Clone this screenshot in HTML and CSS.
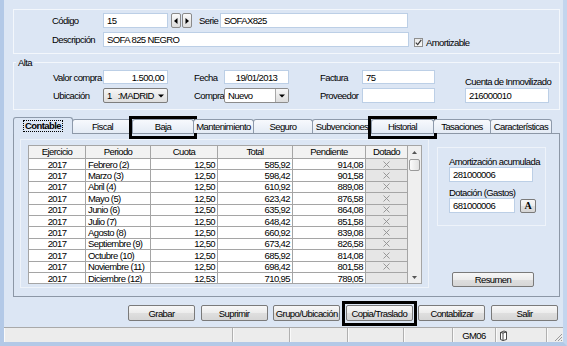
FILE: index.html
```html
<!DOCTYPE html>
<html lang="es">
<head>
<meta charset="utf-8">
<title>Inmovilizado</title>
<link rel="stylesheet" href="styles.css">
</head>
<body>
<div class="win">
  <div class="content">
    <div class="group top">
      <div class="row">
        <span class="lbl w51">Código</span>
        <span class="inp w65">15</span>
        <span class="spin">
          <span class="sb"><svg width="4" height="6" viewBox="0 0 4 6"><path d="M3.5 0 L0 3 L3.5 6 Z" fill="#000"/></svg></span>
          <span class="sb"><svg width="4" height="6" viewBox="0 0 4 6"><path d="M0.5 0 L4 3 L0.5 6 Z" fill="#000"/></svg></span>
        </span>
        <span class="lbl serie">Serie</span>
        <span class="inp w188">SOFAX825</span>
      </div>
      <div class="row">
        <span class="lbl w51">Descripción</span>
        <span class="inp w306">SOFA 825 NEGRO</span>
        <span class="chk"><span class="box"><svg width="7" height="7" viewBox="0 0 7 7"><path d="M0.8 3.6 L2.7 5.6 L6.3 0.9" fill="none" stroke="#3a3a3a" stroke-width="1.2"/></svg></span>Amortizable</span>
      </div>
    </div>

    <fieldset class="alta">
      <legend>Alta</legend>
      <div class="alta-grid">
        <span class="lbl">Valor compra</span>
        <span class="inp right">1.500,00</span>
        <span class="lbl p26">Fecha</span>
        <span class="inp center">19/01/2013</span>
        <span class="lbl p31">Factura</span>
        <span class="inp top-text">75</span>
        <span class="lbl p30 bottom">Cuenta de Inmovilizado</span>

        <span class="lbl">Ubicación</span>
        <span class="combo grey"><span class="val">1&nbsp;&nbsp;&nbsp;:MADRID</span><span class="arrow"><svg width="6" height="4" viewBox="0 0 6 4"><path d="M0 0.5 L6 0.5 L3 3.5 Z" fill="#000"/></svg></span></span>
        <span class="lbl p26">Compra</span>
        <span class="combo"><span class="val">Nuevo</span><span class="arrow btnlike"><svg width="6" height="4" viewBox="0 0 6 4"><path d="M0 0.5 L6 0.5 L3 3.5 Z" fill="#000"/></svg></span></span>
        <span class="lbl p31">Proveedor</span>
        <span class="inp"></span>
        <span class="cuenta"><span class="inp">216000010</span></span>
      </div>
    </fieldset>

    <div class="tabs">
      <span class="tab sel w60"><span class="focus">Contable</span></span>
      <span class="tab w61">Fiscal</span>
      <span class="tab w62 hl">Baja</span>
      <span class="tab w61">Mantenimiento</span>
      <span class="tab w60">Seguro</span>
      <span class="tab w60">Subvenciones</span>
      <span class="tab w63 hl">Historial</span>
      <span class="tab w58">Tasaciones</span>
      <span class="tab w62">Características</span>
    </div>

    <div class="panel">
      <div class="gridbox">
        <table class="grid">
          <colgroup><col class="c1"><col class="c2"><col class="c3"><col class="c4"><col class="c5"><col class="c6"></colgroup>
          <thead>
            <tr><th>Ejercicio</th><th>Periodo</th><th>Cuota</th><th>Total</th><th>Pendiente</th><th>Dotado</th></tr>
          </thead>
          <tbody>
            <tr><td class="c">2017</td><td>Febrero (2)</td><td class="r">12,50</td><td class="r">585,92</td><td class="r">914,08</td><td class="dot"><svg width="7" height="7" viewBox="0 0 7 7"><path d="M0.5 0.5 L6.5 6.5 M6.5 0.5 L0.5 6.5" stroke="#8f8f8f" stroke-width="0.9"/></svg></td></tr>
            <tr><td class="c">2017</td><td>Marzo (3)</td><td class="r">12,50</td><td class="r">598,42</td><td class="r">901,58</td><td class="dot"><svg width="7" height="7" viewBox="0 0 7 7"><path d="M0.5 0.5 L6.5 6.5 M6.5 0.5 L0.5 6.5" stroke="#8f8f8f" stroke-width="0.9"/></svg></td></tr>
            <tr><td class="c">2017</td><td>Abril (4)</td><td class="r">12,50</td><td class="r">610,92</td><td class="r">889,08</td><td class="dot"><svg width="7" height="7" viewBox="0 0 7 7"><path d="M0.5 0.5 L6.5 6.5 M6.5 0.5 L0.5 6.5" stroke="#8f8f8f" stroke-width="0.9"/></svg></td></tr>
            <tr><td class="c">2017</td><td>Mayo (5)</td><td class="r">12,50</td><td class="r">623,42</td><td class="r">876,58</td><td class="dot"><svg width="7" height="7" viewBox="0 0 7 7"><path d="M0.5 0.5 L6.5 6.5 M6.5 0.5 L0.5 6.5" stroke="#8f8f8f" stroke-width="0.9"/></svg></td></tr>
            <tr><td class="c">2017</td><td>Junio (6)</td><td class="r">12,50</td><td class="r">635,92</td><td class="r">864,08</td><td class="dot"><svg width="7" height="7" viewBox="0 0 7 7"><path d="M0.5 0.5 L6.5 6.5 M6.5 0.5 L0.5 6.5" stroke="#8f8f8f" stroke-width="0.9"/></svg></td></tr>
            <tr><td class="c">2017</td><td>Julio (7)</td><td class="r">12,50</td><td class="r">648,42</td><td class="r">851,58</td><td class="dot"><svg width="7" height="7" viewBox="0 0 7 7"><path d="M0.5 0.5 L6.5 6.5 M6.5 0.5 L0.5 6.5" stroke="#8f8f8f" stroke-width="0.9"/></svg></td></tr>
            <tr><td class="c">2017</td><td>Agosto (8)</td><td class="r">12,50</td><td class="r">660,92</td><td class="r">839,08</td><td class="dot"><svg width="7" height="7" viewBox="0 0 7 7"><path d="M0.5 0.5 L6.5 6.5 M6.5 0.5 L0.5 6.5" stroke="#8f8f8f" stroke-width="0.9"/></svg></td></tr>
            <tr><td class="c">2017</td><td>Septiembre (9)</td><td class="r">12,50</td><td class="r">673,42</td><td class="r">826,58</td><td class="dot"><svg width="7" height="7" viewBox="0 0 7 7"><path d="M0.5 0.5 L6.5 6.5 M6.5 0.5 L0.5 6.5" stroke="#8f8f8f" stroke-width="0.9"/></svg></td></tr>
            <tr><td class="c">2017</td><td>Octubre (10)</td><td class="r">12,50</td><td class="r">685,92</td><td class="r">814,08</td><td class="dot"><svg width="7" height="7" viewBox="0 0 7 7"><path d="M0.5 0.5 L6.5 6.5 M6.5 0.5 L0.5 6.5" stroke="#8f8f8f" stroke-width="0.9"/></svg></td></tr>
            <tr><td class="c">2017</td><td>Noviembre (11)</td><td class="r">12,50</td><td class="r">698,42</td><td class="r">801,58</td><td class="dot"><svg width="7" height="7" viewBox="0 0 7 7"><path d="M0.5 0.5 L6.5 6.5 M6.5 0.5 L0.5 6.5" stroke="#8f8f8f" stroke-width="0.9"/></svg></td></tr>
            <tr><td class="c">2017</td><td>Diciembre (12)</td><td class="r">12,53</td><td class="r">710,95</td><td class="r">789,05</td><td class="dot"></td></tr>
          </tbody>
        </table>
        <div class="vscroll">
          <span class="sarrow"><svg width="5" height="3" viewBox="0 0 5 3"><path d="M0 3 L5 3 L2.5 0 Z" fill="#555"/></svg></span>
          <span class="thumb"></span>
          <span class="strack"></span>
          <span class="sarrow"><svg width="5" height="3" viewBox="0 0 5 3"><path d="M0 0 L5 0 L2.5 3 Z" fill="#555"/></svg></span>
        </div>
      </div>

      <div class="side">
        <div class="sidebox">
          <span class="slbl">Amortización acumulada</span>
          <span class="inp w84">281000006</span>
          <span class="slbl mt">Dotación (Gastos)</span>
          <span class="srow"><span class="inp w66">681000006</span><span class="btn abtn">A</span></span>
        </div>
        <span class="btn resumen">Resumen</span>
      </div>
    </div>

    <div class="buttons">
      <span class="btn">Grabar</span>
      <span class="btn">Suprimir</span>
      <span class="btn">Grupo/Ubicación</span>
      <span class="btn hl hlb">Copia/Traslado</span>
      <span class="btn">Contabilizar</span>
      <span class="btn">Salir</span>
    </div>
  </div>

  <div class="status">
    <span class="seg s1"></span>
    <span class="seg s2"></span>
    <span class="seg s3"></span>
    <span class="seg s4"></span>
    <span class="seg s5"></span>
    <span class="seg s6">GM06</span>
    <span class="seg s7"><svg width="9" height="11" viewBox="0 0 9 11"><path d="M1.5 2.5 L5 1 L7.5 2 L7.5 9.5 L4 10.5 L1.5 9.5 Z M4 3 L4 10.5 M1.5 2.5 L4 3 L7.5 2" fill="#fff" stroke="#333" stroke-width="0.9"/></svg></span>
    <span class="seg s8"><svg width="10" height="10" viewBox="0 0 10 10"><path d="M9 2 L2 9 M9 5 L5 9 M9 8 L8 9" stroke="#9a9a9a" stroke-width="1"/></svg></span>
  </div>
</div>
</body>
</html>
```

FILE: styles.css
```css
* { box-sizing: border-box; }
html, body { margin: 0; padding: 0; }
body {
  width: 567px;
  height: 346px;
  overflow: hidden;
  font-family: "Liberation Sans", Arial, sans-serif;
  font-size: 9.5px;
  letter-spacing: -0.6px;
  line-height: 11px;
  color: #000;
  background: #dce6f4;
}
.win {
  width: 567px;
  height: 346px;
  display: flex;
  flex-direction: column;
  background: #dce6f4;
  border-left: 4px solid #b3c9e7;
  border-right: 4px solid #c3d5ee;
  border-bottom: 4px solid #b3c9e7;
}
.content { padding: 9px 3px 0 9px; }

/* generic */
.lbl { white-space: nowrap; display: flex; align-items: center; }
.inp {
  display: flex;
  align-items: center;
  height: 15px;
  background: #fff;
  border: 1px solid #bccfe6;
  padding: 0 3px;
  white-space: nowrap;
  overflow: hidden;
}
.inp.right { justify-content: flex-end; }
.inp.center { justify-content: center; }
.inp.top-text { align-items: flex-start; padding-top: 1px; }
.w51 { width: 51px; }
.w65 { width: 65px; }
.w66 { width: 66px; }
.w84 { width: 84px; }
.w188 { width: 188px; }
.w306 { width: 306px; }

.btn {
  display: flex;
  align-items: center;
  justify-content: center;
  height: 16px;
  border: 1px solid #7a7a7a;
  border-radius: 2px;
  background: linear-gradient(#f7f7f7 0%, #ececec 50%, #dfdfdf 51%, #d6d6d6 100%);
  white-space: nowrap;
}

/* top group */
.group { border: 1px solid #f3f7fc; }
.top { padding: 3px 0 6px 38px; display: flex; flex-direction: column; gap: 4px; }
.row { display: flex; height: 15px; }
.spin { display: flex; margin-left: 3px; width: 21px; height: 15px; gap: 1px; }
.sb {
  flex: 1;
  display: flex;
  align-items: center;
  justify-content: center;
  border: 1px solid #8a8a8a;
  border-radius: 2px;
  background: linear-gradient(#fbfbfb, #dcdcdc);
}
.serie { margin-left: 7px; width: 21px; }
.chk { display: flex; align-items: center; align-self: flex-end; margin-left: 5px; height: 9px; white-space: nowrap; }
.box {
  width: 9px; height: 9px;
  margin-right: 3px;
  border: 1px solid #8e8f8f;
  background: linear-gradient(#e9e9e9, #f8f8f8);
  display: flex; align-items: center; justify-content: center;
}

/* alta */
.alta {
  margin: 3px 0 0 0;
  padding: 2px 0 6px 2px;
  border: 1px solid #f3f7fc;
  min-width: 0;
}
.alta legend { padding: 0 2px; line-height: 11px; }
.alta-grid {
  margin-left: 37px;
  display: grid;
  grid-template-columns: 50px 65px 56px 65px 73px 73px 114px;
  grid-template-rows: 14px 15px;
  row-gap: 4px;
}
.alta-grid .inp { height: auto; }
.p26 { padding-left: 26px; }
.p31 { padding-left: 31px; }
.p30 { padding-left: 30px; }
.bottom { align-items: flex-end; margin-bottom: -3px; }
.cuenta { padding-left: 30px; display: flex; }
.cuenta .inp { width: 84px; }
.combo {
  display: flex;
  border: 1px solid #8c8c8c;
  border-radius: 2px;
  background: #fff;
  overflow: hidden;
}
.combo.grey { background: linear-gradient(#f6f6f6, #dedede); border-color: #7d7d7d; }
.combo .val { flex: 1; display: flex; align-items: center; padding-left: 3px; white-space: nowrap; }
.combo .arrow { width: 13px; display: flex; align-items: center; justify-content: center; }
.combo .arrow.btnlike { border-left: 1px solid #a8a8a8; background: linear-gradient(#f8f8f8, #dcdcdc); }

/* tabs */
.tabs {
  display: flex;
  align-items: flex-end;
  height: 14px;
  margin-top: 9px;
  position: relative;
  z-index: 1;
}
.tab {
  position: relative;
  height: 14px;
  display: flex;
  align-items: center;
  justify-content: center;
  border: 1px solid #8e9aab;
  border-bottom: none;
  border-radius: 3px 3px 0 0;
  background: linear-gradient(#f7f9fd, #e4ebf5);
  white-space: nowrap;
}
.tab + .tab { margin-left: -1px; }
.w60 { width: 60px; }
.w61 { width: 61px; }
.w62 { width: 62px; }
.w63 { width: 63px; }
.w58 { width: 58px; }
.tab.sel {
  height: 17px;
  margin-bottom: -1px;
  background: #dce6f4;
  font-weight: bold;
}
.focus { outline: 1px dotted #000; padding: 0 1px; line-height: 10px; }

/* black highlight frames drawn over the controls */
.hl { position: relative; }
.hl::after {
  content: "";
  position: absolute;
  left: -4px;
  right: -4px;
  top: -4px;
  bottom: -6px;
  border: 3px solid #000;
  pointer-events: none;
}
.hlb::after { left: -5px; right: -5px; top: -5px; bottom: -6px; }

/* panel */
.panel {
  height: 164px;
  border: 1px solid #8c97a6;
  display: flex;
  padding: 5px 0 0 6px;
  background: #dce6f4;
}
.gridbox {
  align-self: flex-start;
  display: flex;
  border: 1px solid #eef3fa;
  padding: 5px 6px 3px 7px;
}
.grid {
  border-collapse: collapse;
  table-layout: fixed;
  width: 379px;
  border: 1px solid #7c7c7c;
  background: #fff;
}
.c1 { width: 57px; }
.c2 { width: 65px; }
.c3 { width: 67px; }
.c4 { width: 75px; }
.c5 { width: 73px; }
.c6 { width: 42px; }
.grid th {
  height: 13px;
  padding: 0;
  font-weight: normal;
  background: #f2f2f2;
  border: 1px solid #a5a5a5;
  line-height: 10px;
}
.grid td {
  height: 11.4px;
  padding: 0 2px;
  border: 1px solid #a5a5a5;
  line-height: 9px;
  white-space: nowrap;
  overflow: hidden;
}
.grid td.c { text-align: center; }
.grid td.r { text-align: right; }
.grid td.dot { background: #e6e6e6; text-align: center; line-height: 0; }
.vscroll {
  width: 14px;
  display: flex;
  flex-direction: column;
  background: #efefef;
  border: 1px solid #a5a5a5;
  border-left: none;
}
.sarrow { height: 12px; display: flex; align-items: center; justify-content: center; }
.thumb {
  height: 12px;
  margin: 1px 1px 0;
  border: 1px solid #9a9a9a;
  border-radius: 2px;
  background: linear-gradient(90deg, #fbfbfb, #e2e2e2);
}
.strack { flex: 1; }

.side {
  display: flex;
  flex-direction: column;
  width: 109px;
  margin-left: 8px;
  padding-top: 8px;
}
.sidebox {
  border: 1px solid #eef3fa;
  padding: 8px 0 12px 11px;
  display: flex;
  flex-direction: column;
}
.slbl { line-height: 11px; white-space: nowrap; }
.slbl.mt { margin-top: 5px; }
.srow { display: flex; align-items: center; }
.abtn {
  width: 16px;
  height: 14px;
  margin-left: 5px;
  font-family: "Liberation Serif", serif;
  font-weight: bold;
  font-size: 10px;
  letter-spacing: 0;
}
.resumen { margin: auto 0 9px 15px; width: 82px; height: 15px; }

/* buttons */
.buttons {
  display: flex;
  justify-content: flex-end;
  gap: 5.6px;
  margin-top: 8px;
  padding-right: 2px;
}
.buttons .btn { width: 67px; }

/* status */
.status {
  height: 15px;
  margin-top: 6px;
  display: flex;
  background: #ececec;
  border-top: 1px solid #a9a9a9;
}
.seg {
  border-right: 1px solid #b0b0b0;
  box-shadow: inset 1px 0 0 #fafafa;
  display: flex;
  align-items: center;
  justify-content: center;
}
.s1 { width: 229px; }
.s2 { width: 57px; }
.s3 { width: 58px; }
.s4 { width: 56px; }
.s5 { width: 49px; }
.s6 { width: 43px; }
.s7 { width: 51px; justify-content: flex-start; padding-left: 3px; }
.s8 { flex: 1; border-right: none; justify-content: flex-end; align-items: flex-end; }
```
